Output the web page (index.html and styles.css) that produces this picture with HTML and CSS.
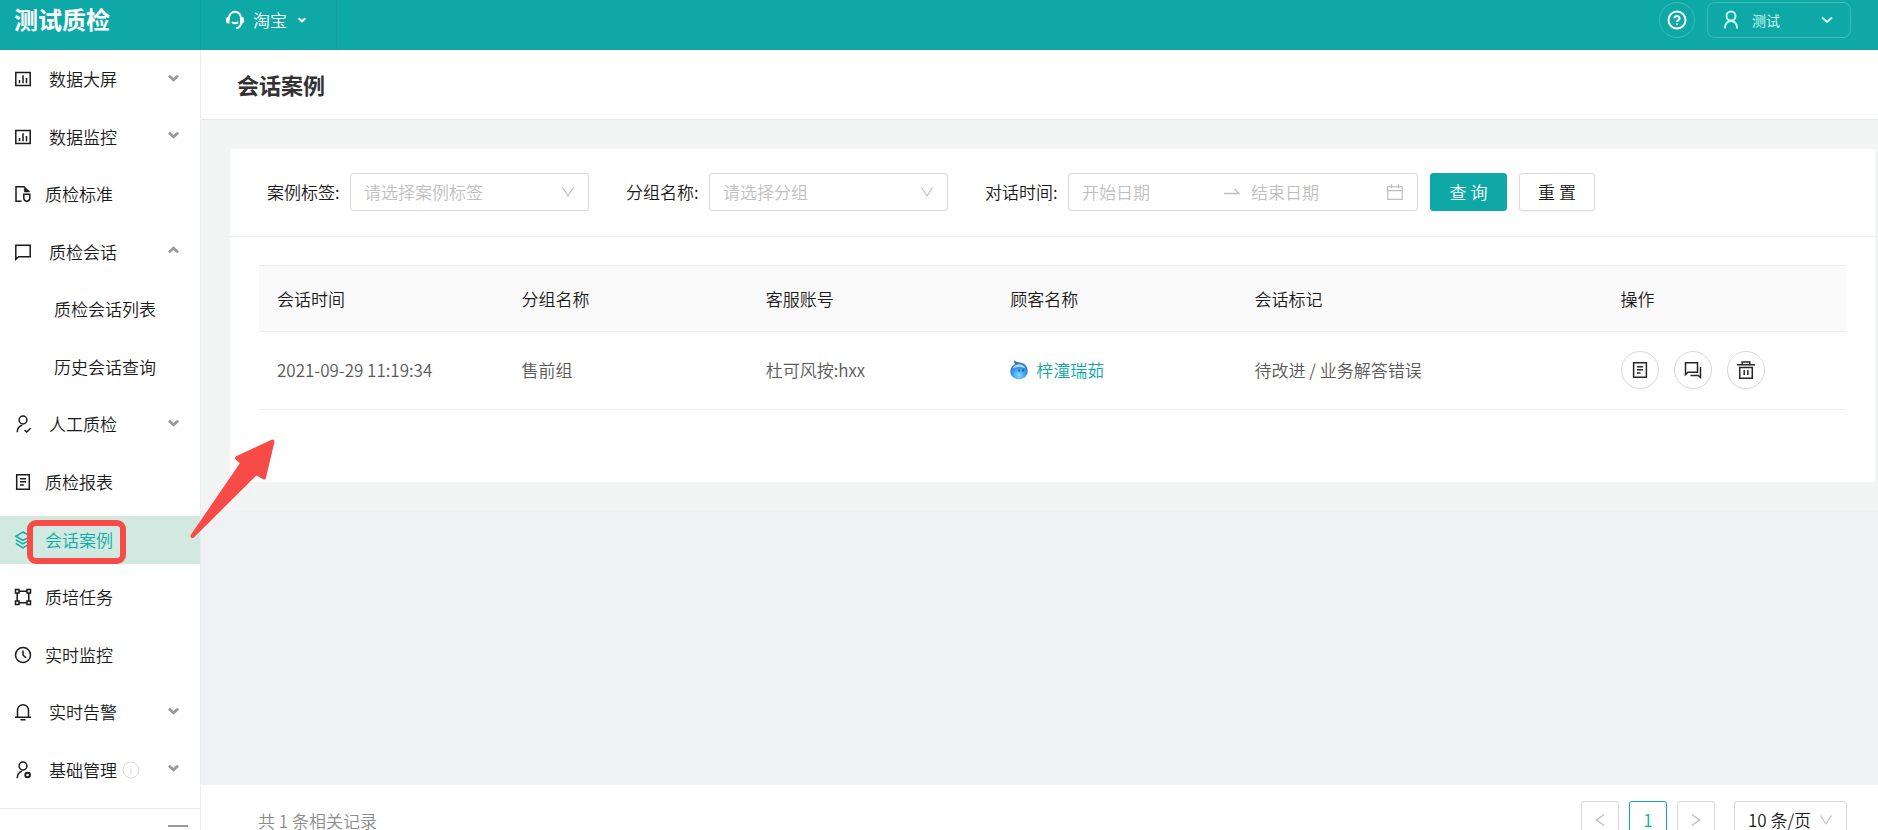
FILE: index.html
```html
<!DOCTYPE html>
<html lang="zh-CN">
<head>
<meta charset="utf-8">
<title>会话案例</title>
<link rel="stylesheet" href="styles.css">
</head>
<body>
<svg class="sprite" aria-hidden="true">
  <symbol id="i-chart" viewBox="0 0 18 18"><path d="M1.800 2.500h14.400v13H1.800zM5.500 10v3.200M9 5.200v8M12.500 8v5.200" /></symbol>
  <symbol id="i-standard" viewBox="0 0 18 18"><path d="M7.500 16.200H2V1.800h8.500M15.500 6.500H10.500"/><path d="M10.300 1.500l5.200 5h-5.200z" fill="currentColor" stroke-width=".5"/><path d="M9.800 9.200h6v4c0 1.800-1.500 2.800-3 3.300-1.500-.5-3-1.500-3-3.300z"/></symbol>
  <symbol id="i-chat" viewBox="0 0 18 18"><path d="M1.800 2.300h14.400v11.400H4.500l-2.700 2.500z"/></symbol>
  <symbol id="i-usercheck" viewBox="0 0 18 18"><circle cx="9" cy="5" r="3.900"/><path d="M3.200 17.200c0-3.800 2-6.200 5-7M10.500 15l2.200 2 4-3.800"/></symbol>
  <symbol id="i-report" viewBox="0 0 18 18"><path d="M2.700 1.800h12.600v14.400H2.700zM6 5.700h6M6 8.800h6M6 11.900h3.800"/></symbol>
  <symbol id="i-layers" viewBox="0 0 18 18"><path d="M9 1l7.200 4.200L9 9.400 1.800 5.200zM1.800 8.800L9 13l7.200-4.200M1.800 12.400L9 16.800l7.200-4.400"/></symbol>
  <symbol id="i-task" viewBox="0 0 18 18"><path d="M1.500 1.500H5V5H1.500zM13 1.500h3.500V5H13zM1.500 13H5v3.500H1.500zM13 13h3.500v3.500H13zM5 3.200h8M5 14.800h8M3.200 5v8M14.800 5v8"/></symbol>
  <symbol id="i-clock" viewBox="0 0 18 18"><circle cx="9" cy="9" r="7.500"/><path d="M9 4.500V9l3.200 3"/></symbol>
  <symbol id="i-bell" viewBox="0 0 18 18"><path d="M1 14.200h16M3.500 14V7.200a5.500 5.500 0 0 1 11 0V14M6.500 16.800h5"/></symbol>
  <symbol id="i-usergear" viewBox="0 0 18 18"><circle cx="9" cy="5" r="3.900"/><path d="M3.200 17.200c0-3.800 2-6.200 5-7"/><circle cx="13.600" cy="14" r="2.300" stroke-width="2"/></symbol>
  <symbol id="i-caret" viewBox="0 0 12 8"><path d="M1 1.500l5 4.500 5-4.500"/></symbol>
  <symbol id="i-down" viewBox="0 0 14 12"><path d="M1.500 1.500L7 10l5.500-8.500"/></symbol>
  <symbol id="i-headset" viewBox="0 0 20 20"><path d="M4 9.500V8a6 6.200 0 0 1 12 0v5c0 2.500-1.800 4.600-4.800 5.400M7 12c1.500 1.700 4.500 1.700 6 0"/><path d="M4.500 7v6.500H3A2 2 0 0 1 1 11.500V9a2 2 0 0 1 2-2zM15.500 7v6.500H17a2 2 0 0 0 2-2V9a2 2 0 0 0-2-2z" fill="currentColor" stroke="none"/></symbol>
</svg>

<div class="app">
  <header class="topbar">
    <div class="brand">测试质检</div>
    <button class="shop" type="button">
      <svg class="shop-icon"><use href="#i-headset"/></svg>淘宝<svg class="shop-caret"><use href="#i-caret"/></svg>
    </button>
    <div class="tools">
      <button class="help" type="button" aria-label="帮助">
        <svg class="help-icon" viewBox="0 0 20 20"><circle cx="10" cy="10" r="8.500"/><path d="M7.500 8.300a2.500 2.300 0 1 1 3.800 1.900c-.9.500-1.300.9-1.300 1.800M10 13.400v1.700"/></svg>
      </button>
      <button class="user" type="button">
        <svg class="user-icon" viewBox="0 0 18 20"><circle cx="9" cy="6" r="4.500"/><path d="M3 18.500c0-5 2.500-7.500 6-7.500s6 2.500 6 7.500"/></svg>
        <span>测试</span>
        <svg class="user-caret"><use href="#i-caret"/></svg>
      </button>
    </div>
  </header>

  <aside class="sidebar">
    <nav class="menu">
      <a class="item group" href="#"><svg class="icon"><use href="#i-chart"/></svg>数据大屏<svg class="caret"><use href="#i-caret"/></svg></a>
      <a class="item group" href="#"><svg class="icon"><use href="#i-chart"/></svg>数据监控<svg class="caret"><use href="#i-caret"/></svg></a>
      <a class="item" href="#"><svg class="icon"><use href="#i-standard"/></svg>质检标准</a>
      <a class="item group" href="#"><svg class="icon"><use href="#i-chat"/></svg>质检会话<svg class="caret open"><use href="#i-caret"/></svg></a>
      <a class="item sub" href="#">质检会话列表</a>
      <a class="item sub" href="#">历史会话查询</a>
      <a class="item group" href="#"><svg class="icon"><use href="#i-usercheck"/></svg>人工质检<svg class="caret"><use href="#i-caret"/></svg></a>
      <a class="item" href="#"><svg class="icon"><use href="#i-report"/></svg>质检报表</a>
      <a class="item active" href="#"><svg class="icon"><use href="#i-layers"/></svg>会话案例</a>
      <a class="item" href="#"><svg class="icon"><use href="#i-task"/></svg>质培任务</a>
      <a class="item" href="#"><svg class="icon"><use href="#i-clock"/></svg>实时监控</a>
      <a class="item group" href="#"><svg class="icon"><use href="#i-bell"/></svg>实时告警<svg class="caret"><use href="#i-caret"/></svg></a>
      <a class="item group" href="#"><svg class="icon"><use href="#i-usergear"/></svg>基础管理<svg class="info" viewBox="0 0 18 18"><circle cx="9" cy="9" r="8"/><path d="M9 7.500V13M9 4.800v1.300"/></svg><svg class="caret"><use href="#i-caret"/></svg></a>
    </nav>
    <div class="fold">
      <svg class="fold-icon" viewBox="0 0 20 16"><path d="M0 1h20M6 6h14M0 11h20"/></svg>
    </div>
  </aside>

  <main class="content">
    <h1 class="title">会话案例</h1>
    <div class="body">
      <section class="card">
        <form class="filters">
          <div class="field">
            <label for="tag">案例标签:</label>
            <div class="select wide"><select id="tag"><option>请选择案例标签</option></select><svg class="down"><use href="#i-down"/></svg></div>
          </div>
          <div class="field">
            <label for="grp">分组名称:</label>
            <div class="select wide"><select id="grp"><option>请选择分组</option></select><svg class="down"><use href="#i-down"/></svg></div>
          </div>
          <div class="field">
            <label for="from">对话时间:</label>
            <div class="range">
              <input id="from" type="text" placeholder="开始日期">
              <svg class="to" viewBox="0 0 16 16"><path d="M0 9.500h15L10.500 5"/></svg>
              <input class="until" type="text" placeholder="结束日期" aria-label="结束日期">
              <svg class="cal" viewBox="0 0 16 16"><path d="M.700 2.700h14.600v12.600H.700zM.700 6.700h14.600M4.500.300v4M11.500.300v4"/></svg>
            </div>
            <button class="btn primary" type="button">查 询</button>
            <button class="btn" type="button">重 置</button>
          </div>
        </form>
        <div class="table-wrap">
          <table>
            <colgroup><col class="c2"><col class="c2"><col class="c2"><col class="c2"><col class="c3"><col class="c2"></colgroup>
            <thead>
              <tr><th>会话时间</th><th>分组名称</th><th>客服账号</th><th>顾客名称</th><th>会话标记</th><th>操作</th></tr>
            </thead>
            <tbody>
              <tr>
                <td>2021-09-29 11:19:34</td>
                <td>售前组</td>
                <td>杜可风按:hxx</td>
                <td><a class="customer" href="#"><svg class="drop" viewBox="0 0 18 20">
                  <defs><radialGradient id="drop" cx=".5" cy=".8" r=".7"><stop offset="0" stop-color="#7fdcff"/><stop offset=".55" stop-color="#3a9bea"/><stop offset="1" stop-color="#3468b8"/></radialGradient></defs>
                  <path d="M4.500 0c1 2.200 3.500 2.200 6.500 2.800 4 .8 6.700 4 6.700 8.200 0 5-3.900 8.200-8.700 8.200S.300 16 .300 11.500C.300 8 2.300 5.300 5 4.200 4 3 4 1.500 4.500 0z" fill="url(#drop)"/>
                  <path d="M2.500 8.500c2-5 10-6 13 0-4-2-9-2-13 0z" fill="#b5d8f8"/><path d="M9 9.500v2M13 9.500v2" stroke="#123f87" stroke-width="1.300"/></svg>梓潼瑞茹</a></td>
                <td>待改进 / 业务解答错误</td>
                <td><div class="actions">
                  <button type="button" aria-label="详情"><svg class="act" viewBox="0 0 18 18"><path d="M2.600 1.800h12.800v14.400H2.600zM6 5.700h6M6 8.800h6M6 11.900h3.500"/></svg></button>
                  <button type="button" aria-label="会话"><svg class="act" viewBox="0 0 18 18"><path d="M1.500 1.800h12v9.400H4L1.500 13.500zM16.500 6v10.500l-2.300-2H6.500"/></svg></button>
                  <button type="button" aria-label="删除"><svg class="act" viewBox="0 0 18 18"><path d="M0 3.800h18M5.200 3.500V1h7.600v2.500M2.700 6.500h12.600v10.700H2.700zM7.200 9v5M10.800 9v5"/></svg></button>
                </div></td>
              </tr>
            </tbody>
          </table>
        </div>
      </section>
    </div>
    <footer class="pager">
      <span class="total">共 1 条相关记录</span>
      <button class="page" type="button" aria-label="上一页"><svg class="arrow" viewBox="0 0 10 14"><path d="M9 1.500L1.500 7 9 12.500"/></svg></button>
      <button class="page current" type="button">1</button>
      <button class="page" type="button" aria-label="下一页"><svg class="arrow" viewBox="0 0 10 14"><path d="M1 1.500L8.500 7 1 12.500"/></svg></button>
      <div class="select size"><select aria-label="每页条数"><option>10 条/页</option></select><svg class="down"><use href="#i-down"/></svg></div>
    </footer>
  </main>

  <div class="mark-box"></div>
  <svg class="mark-arrow" viewBox="0 0 90 104"><path d="M3.500 100L53.500 27 48 22 83.500 5.500 75 41.500 67 37z"/></svg>
</div>
</body>
</html>
```
FILE: styles.css
```css
* { box-sizing: border-box; }

body {
  margin: 0;
  font: 350 17px/26px "Noto Sans CJK SC", sans-serif;
  color: #1a1a1a;
}

button, input, select { font: inherit; color: inherit; margin: 0; }
button { cursor: pointer; padding: 0; }
a { color: inherit; text-decoration: none; }
svg { flex: none; fill: none; stroke: currentColor; stroke-width: 1.5; }
.sprite { display: none; }

.app {
  position: relative;
  display: grid;
  grid-template: 50px 1fr / 201px 1fr;
  height: 100vh;
  overflow: hidden;
}

/* top bar */
.topbar {
  grid-column: 1 / -1;
  display: flex;
  background: #0ea9a7;
  color: #fff;
}
.brand {
  width: 200px;
  padding: 0 14px;
  font-size: 24px;
  font-weight: 700;
  line-height: 38px;
}
.shop {
  display: flex;
  align-items: center;
  width: 137px;
  padding: 0 0 10px 24px;
  border: solid #1a9b9b;
  border-width: 0 1px;
  background: none;
}
.shop-icon { width: 20px; height: 20px; margin-right: 8px; stroke-width: 2; }
.shop-caret { width: 8px; height: 6px; margin-left: 11px; stroke-width: 3; }
.tools {
  display: flex;
  gap: 12px;
  margin-left: auto;
  padding: 2px 27px 12px 0;
}
.help, .user {
  display: flex;
  align-items: center;
  height: 36px;
  border: 1px solid #3fbbb8;
  background: none;
}
.help { width: 36px; justify-content: center; border-radius: 50%; }
.help-icon { width: 20px; height: 20px; stroke-width: 2; }
.user {
  width: 144px;
  padding: 0 17px 0 14px;
  border-radius: 8px;
  font-size: 14px;
  font-weight: 400;
  color: #c9f7f1;
}
.user-icon { width: 18px; height: 20px; margin-right: 12px; stroke-width: 2; }
.user-caret { width: 12px; height: 8px; margin-left: auto; stroke-width: 2; }

/* side menu */
.sidebar {
  display: flex;
  flex-direction: column;
  min-height: 0;
  border-right: 1px solid #ebeded;
  background: #fff;
}
.menu {
  flex: 1;
  display: flex;
  flex-direction: column;
  justify-content: space-between;
  padding: 5px 0 14px;
}
.item {
  display: flex;
  align-items: center;
  height: 48px;
  padding: 0 21px 0 14px;
}
.icon { width: 18px; height: 18px; margin-right: 13px; }
.group .icon { margin-right: 17px; }
.sub { padding-left: 54px; }
.active { background: #d2e9e2; color: #0ea9a7; }
.caret { width: 11px; height: 8px; margin: 0 0 3px auto; color: #999; stroke-width: 3; }
.open { transform: rotate(180deg); }
.info { width: 18px; height: 18px; margin-left: 5px; color: #d9d9d9; stroke-width: 1; }
.fold {
  height: 22px;
  padding: 16px 12px 0 0;
  border-top: 1px solid #e8eaea;
  overflow: hidden;
  text-align: right;
  line-height: 0;
}
.fold-icon { width: 20px; height: 16px; color: #999; stroke-width: 2; }

/* content */
.content {
  display: flex;
  flex-direction: column;
  min-width: 0;
  min-height: 0;
  background: #f0f1f5;
}
.title {
  margin: 0;
  padding: 18px 36px 19px;
  border-bottom: 1px solid #e6e8e8;
  background: #fff;
  font-size: 22px;
  font-weight: 700;
  line-height: 32px;
  color: #333;
}
.body { padding: 29px 3px 29px 29px; background: #f3f5f4; }
.card { padding-bottom: 72px; background: #fff; }

.filters {
  display: flex;
  gap: 37px;
  padding: 24px 37px 25px;
  border-bottom: 1px solid #eee;
}
.field { display: flex; align-items: center; }
.field label { width: 83px; white-space: nowrap; }

.select { display: grid; }
.select select {
  grid-area: 1 / 1;
  width: 100%;
  height: 38px;
  padding: 0 13px;
  border: 1px solid #d9d9d9;
  border-radius: 3px;
  background: #fff;
  appearance: none;
}
.wide { width: 239px; }
.wide select { color: #bfbfbf; }
.down {
  grid-area: 1 / 1;
  align-self: center;
  justify-self: end;
  width: 14px;
  height: 12px;
  margin-right: 14px;
  color: #bfbfbf;
  stroke-width: 1.2;
  pointer-events: none;
}

.range {
  display: flex;
  align-items: center;
  width: 350px;
  height: 38px;
  padding: 0 14px 0 13px;
  border: 1px solid #d9d9d9;
  border-radius: 3px;
  color: #bfbfbf;
}
.range input {
  flex: 1;
  width: 0;
  padding: 0;
  border: 0;
  background: none;
  outline: none;
}
.range .until { flex: 0 1 136px; }
.range input::placeholder { color: #bfbfbf; }
.to { width: 16px; height: 16px; margin-right: 11px; }
.cal { width: 16px; height: 16px; stroke-width: 1.2; }

.btn {
  width: 76px;
  height: 38px;
  margin-left: 12px;
  border: 1px solid #d9d9d9;
  border-radius: 3px;
  background: #fff;
  box-shadow: 0 2px 0 #00000005;
}
.primary { width: 77px; border-color: #0ea9a7; background: #0ea9a7; color: #fff; }

.table-wrap { padding: 28px 29px 0; }
table { width: 100%; table-layout: fixed; border-collapse: separate; border-spacing: 0; }
.c2 { width: 15.4%; }
.c3 { width: 23%; }
th, td { padding: 0 18px; border-bottom: 1px solid #eee; text-align: left; font-weight: inherit; }
th { height: 67px; border-top: 1px solid #eee; background: #fafafa; }
td { height: 78px; padding-bottom: 1px; color: #595959; }
th:last-child, td:last-child { padding-left: 19px; }
.customer { display: flex; align-items: center; color: #0ea9a7; }
.drop { width: 18px; height: 20px; margin-right: 8px; stroke: none; }
.actions { display: flex; gap: 15px; color: #262626; }
.actions button {
  display: grid;
  place-items: center;
  width: 38px;
  height: 38px;
  border: 1px solid #d9d9d9;
  border-radius: 50%;
  background: #fff;
  box-shadow: 0 2px 0 #00000005;
}
.act { width: 18px; height: 18px; }

/* pagination */
.pager {
  display: flex;
  align-items: flex-start;
  gap: 10px;
  height: 45px;
  margin-top: auto;
  padding: 16px 31px 0 57px;
  background: #fff;
}
.total { margin-right: auto; line-height: 40px; color: #8c8c8c; }
.page {
  display: grid;
  place-items: center;
  width: 38px;
  height: 38px;
  border: 1px solid #d9d9d9;
  border-radius: 3px;
  background: #fff;
  color: #bfbfbf;
}
.current { border-color: #0ea9a7; color: #0ea9a7; }
.arrow { width: 10px; height: 14px; }
.size { width: 113px; margin-left: 9px; }

/* annotations over the page */
.mark-box {
  position: absolute;
  left: 27px;
  top: 520px;
  width: 99px;
  height: 44px;
  border: 6px solid #f74b47;
  border-radius: 9px;
}
.mark-arrow {
  position: absolute;
  left: 189px;
  top: 436px;
  width: 90px;
  height: 104px;
  fill: #f74b47;
  stroke: #f74b47;
  stroke-width: 4;
  stroke-linejoin: round;
}
```
